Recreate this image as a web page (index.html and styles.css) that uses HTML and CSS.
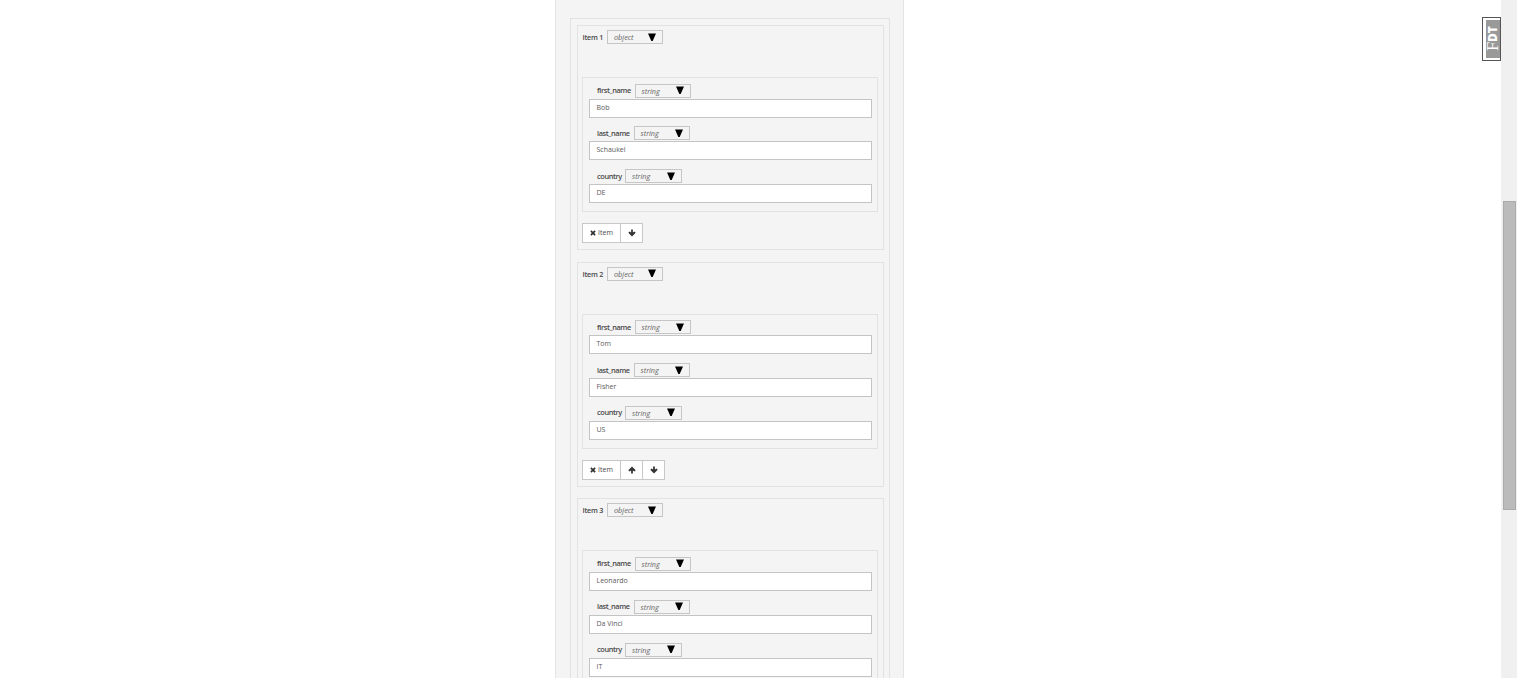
FILE: index.html
```html
<!DOCTYPE html>
<html lang="en">
<head>
    <meta charset="UTF-8">
    <meta name="viewport" content="width=device-width, initial-scale=1.0">
    <title>Form</title>
    <link rel="stylesheet" href="styles.css">
</head>
<body>
    <svg width="0" height="0" class="icons">
        <symbol id="caret" viewBox="0 0 8 8"><path d="M0 0.5H8L4.7 8H3.3Z"/></symbol>
        <symbol id="remove" viewBox="0 0 10 10"><path d="M2.5 0.5L5 3L7.5 0.5L9.5 2.5L7 5L9.5 7.5L7.5 9.5L5 7L2.5 9.5L0.5 7.5L3 5L0.5 2.5Z"/></symbol>
        <symbol id="down" viewBox="0 0 10 10"><path d="M3.9 0.5H6.1V4.5L8.1 3.2L9.6 4.7L5 9.5L0.4 4.7L1.9 3.2L3.9 4.5Z"/></symbol>
        <symbol id="up" viewBox="0 0 10 10"><path d="M3.9 9.5H6.1V5.5L8.1 6.8L9.6 5.3L5 0.5L0.4 5.3L1.9 6.8L3.9 5.5Z"/></symbol>
    </svg>

    <main class="panel">
        <div class="list">
            <section class="item">
                <div class="item-head">
                    <span class="title">Item 1</span>
                    <div class="type"><span>object</span><svg class="caret"><use href="#caret"/></svg></div>
                </div>
                <div class="fields">
                    <div class="field">
                        <div class="field-head"><span class="label first">first_name</span><div class="type"><span>string</span><svg class="caret"><use href="#caret"/></svg></div></div>
                        <div class="value">Bob</div>
                    </div>
                    <div class="field">
                        <div class="field-head"><span class="label last">last_name</span><div class="type"><span>string</span><svg class="caret"><use href="#caret"/></svg></div></div>
                        <div class="value">Schaukel</div>
                    </div>
                    <div class="field">
                        <div class="field-head"><span class="label country">country</span><div class="type wide"><span>string</span><svg class="caret"><use href="#caret"/></svg></div></div>
                        <div class="value">DE</div>
                    </div>
                </div>
                <div class="buttons">
                    <div class="btn delete"><svg class="remove"><use href="#remove"/></svg><span>Item</span></div>
                    <div class="btn"><svg class="arrow"><use href="#down"/></svg></div>
                </div>
            </section>

            <section class="item">
                <div class="item-head">
                    <span class="title">Item 2</span>
                    <div class="type"><span>object</span><svg class="caret"><use href="#caret"/></svg></div>
                </div>
                <div class="fields">
                    <div class="field">
                        <div class="field-head"><span class="label first">first_name</span><div class="type"><span>string</span><svg class="caret"><use href="#caret"/></svg></div></div>
                        <div class="value">Tom</div>
                    </div>
                    <div class="field">
                        <div class="field-head"><span class="label last">last_name</span><div class="type"><span>string</span><svg class="caret"><use href="#caret"/></svg></div></div>
                        <div class="value">Fisher</div>
                    </div>
                    <div class="field">
                        <div class="field-head"><span class="label country">country</span><div class="type wide"><span>string</span><svg class="caret"><use href="#caret"/></svg></div></div>
                        <div class="value">US</div>
                    </div>
                </div>
                <div class="buttons">
                    <div class="btn delete"><svg class="remove"><use href="#remove"/></svg><span>Item</span></div>
                    <div class="btn"><svg class="arrow"><use href="#up"/></svg></div>
                    <div class="btn"><svg class="arrow"><use href="#down"/></svg></div>
                </div>
            </section>

            <section class="item">
                <div class="item-head">
                    <span class="title">Item 3</span>
                    <div class="type"><span>object</span><svg class="caret"><use href="#caret"/></svg></div>
                </div>
                <div class="fields">
                    <div class="field">
                        <div class="field-head"><span class="label first">first_name</span><div class="type"><span>string</span><svg class="caret"><use href="#caret"/></svg></div></div>
                        <div class="value">Leonardo</div>
                    </div>
                    <div class="field">
                        <div class="field-head"><span class="label last">last_name</span><div class="type"><span>string</span><svg class="caret"><use href="#caret"/></svg></div></div>
                        <div class="value">Da Vinci</div>
                    </div>
                    <div class="field">
                        <div class="field-head"><span class="label country">country</span><div class="type wide"><span>string</span><svg class="caret"><use href="#caret"/></svg></div></div>
                        <div class="value">IT</div>
                    </div>
                </div>
            </section>
        </div>
    </main>

    <div class="badge"><div class="badge-text"><span class="badge-f">F</span><span>DT</span></div></div>
    <div class="scrollbar"><div class="thumb"></div></div>
</body>
</html>
```
FILE: styles.css
```css
* {
    box-sizing: border-box;
}

body {
    margin: 0;
    height: 678px;
    display: flex;
    justify-content: space-between;
    overflow: hidden;
    position: relative;
    background: #fff;
    color: #4a4a4a;
    font-family: "Open Sans", sans-serif;
    font-size: 7px;
    line-height: 10px;
}

.icons {
    position: absolute;
}

.panel {
    width: 349px;
    height: 678px;
    flex: none;
    margin-left: 555px;
    padding: 18px 14px 0 14px;
    overflow: hidden;
    background: #f4f4f4;
    border: solid #e4e4e4;
    border-width: 0 1px;
}

.panel .list {
    width: 320px;
    height: 660px;
    padding: 6px 5px 0 6px;
    overflow: hidden;
    border: 1px solid #e2e2e2;
    border-bottom: 0;
}

.item {
    width: 307px;
    height: 225px;
    margin-bottom: 11.7px;
    padding: 4px 5px 0 4px;
    border: 1px solid #e2e2e2;
}

.item-head {
    display: flex;
    align-items: center;
    height: 14px;
    padding-left: 0.5px;
}

.title {
    width: 24.5px;
    font-size: 7.2px;
    font-weight: 600;
    letter-spacing: -0.25px;
    white-space: nowrap;
}

.type {
    width: 56px;
    height: 14px;
    display: flex;
    align-items: center;
    justify-content: space-between;
    padding: 0 6px;
    border: 1px solid #c6c6c6;
    color: #666;
    font-size: 7.3px;
    font-style: italic;
}

.wide {
    width: 57px;
}

.caret {
    width: 8px;
    height: 8px;
    margin-bottom: 1px;
    fill: #000;
}

.fields {
    width: 296px;
    height: 135px;
    margin-top: 33px;
    padding: 5.6px 5px 0 6px;
    border: 1px solid #e2e2e2;
}

.field {
    height: 42.8px;
}

.field-head {
    display: flex;
    align-items: center;
    padding-left: 8px;
}

.label {
    margin-top: -1px;
    font-size: 7.4px;
    font-weight: 600;
    letter-spacing: -0.4px;
    white-space: nowrap;
}

.first {
    width: 37.6px;
}

.last {
    width: 36.6px;
}

.country {
    width: 28px;
}

.value {
    width: 283px;
    height: 19px;
    margin-top: 1px;
    padding: 3px 6.5px;
    border: 1px solid #c4c4c4;
    background: #fff;
    color: #5a5a5a;
}

.buttons {
    display: flex;
    margin-top: 11px;
}

.btn {
    width: 23px;
    height: 20px;
    margin-right: -1px;
    display: flex;
    align-items: center;
    justify-content: center;
    border: 1px solid #c8c8c8;
    background: #fff;
}

.delete {
    width: 39px;
    gap: 2px;
}

.remove {
    width: 6px;
    height: 6px;
    fill: #333;
}

.arrow {
    width: 8px;
    height: 8px;
    fill: #333;
}

/* floating tab on the right edge */
.badge {
    position: absolute;
    top: 17px;
    right: 16px;
    width: 19px;
    height: 44px;
    padding: 2px 0 2px 3px;
    border: 1px solid #555;
    background: #fff;
}

.badge-text {
    width: 14px;
    height: 38px;
    display: flex;
    align-items: center;
    padding: 7px 0 0;
    background: #999;
    color: #fff;
    writing-mode: vertical-rl;
    transform: rotate(180deg);
    font-size: 12px;
    font-weight: 800;
    line-height: 14px;
    white-space: nowrap;
}

.badge-f {
    font-family: "Liberation Serif", serif;
    font-size: 17px;
    font-weight: 400;
}

.scrollbar {
    width: 16px;
    height: 678px;
    padding: 201px 1px 0 2px;
    background: #f0f0f0;
}

.thumb {
    height: 309px;
    border: 1px solid #aaa;
    background: #bbb;
}
```
